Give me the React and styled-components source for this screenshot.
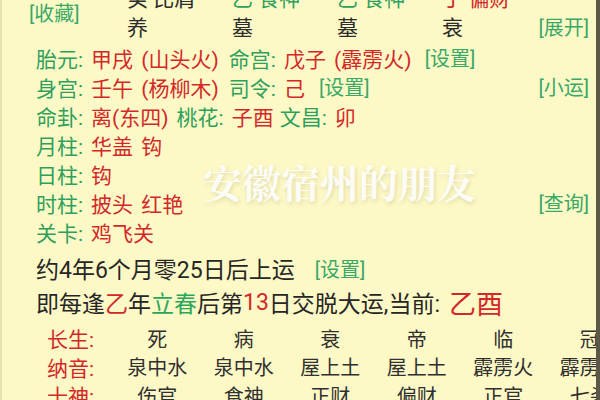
import React from "react";
import styled, { createGlobalStyle } from "styled-components";

const Global = createGlobalStyle`
  html, body { margin: 0; padding: 0; background: #5b5848; }
  body { font-family: Roboto, "Noto Sans CJK SC", sans-serif; }
`;

const GREEN = "#2f9f5c";
const LINK = "#3aa866";
const RED = "#d3282a";
const INK = "#2c2c2c";

const Screen = styled.div`
  position: relative;
  width: 594px;
  height: 400px;
  overflow: hidden;
  background: #fdf9c6;
  border-left: 2px solid #e6e1b0;
  font-family: Roboto, "Noto Sans CJK SC", sans-serif;
  color: ${INK};
`;

const Content = styled.div`
  margin-top: -15px;
  display: flex;
  flex-direction: column;
`;

const PillarHead = styled.div`
  display: grid;
  grid-template-columns: 125px repeat(4, 105px) minmax(0, 1fr);
  grid-template-rows: 29px 29px;
  align-items: center;
  font-size: 21px;
  line-height: 29px;
`;

const Link = styled.span`
  color: ${LINK};
  font-size: ${(p) => p.$size || 20}px;
  margin-left: ${(p) => p.$ml || 0}px;
  white-space: nowrap;
`;

const SideLink = styled(Link)`
  grid-row: ${(p) => p.$row};
  grid-column: ${(p) => p.$col};
  justify-self: ${(p) => p.$justify || "start"};
  align-self: center;
  padding-left: ${(p) => p.$pl || 0}px;
  padding-right: ${(p) => p.$pr || 0}px;
`;

const Cell = styled.span`
  grid-row: ${(p) => p.$row};
  grid-column: ${(p) => p.$col};
  color: ${(p) => p.$color || INK};
  white-space: nowrap;
`;

const InfoRow = styled.div`
  display: flex;
  align-items: center;
  justify-content: space-between;
  height: 29px;
  padding: 0 7px 0 34px;
  font-size: 21px;
  white-space: nowrap;
`;

const Left = styled.span`
  display: flex;
  align-items: center;
`;

const Label = styled.span`
  color: ${GREEN};
  margin-right: 8px;
  margin-left: ${(p) => p.$ml || 0}px;
`;

const Val = styled.span`
  color: ${(p) => p.$color || RED};
  margin-left: ${(p) => p.$ml || 0}px;
  word-spacing: 3px;
`;

const Sentence = styled.div`
  display: flex;
  align-items: center;
  height: 34px;
  padding-left: 34px;
  font-size: 23px;
  white-space: nowrap;
  margin-top: ${(p) => p.$mt || 0}px;
  color: #262626;
`;

const Em = styled.span`
  color: ${(p) => p.$color};
  font-size: ${(p) => p.$size || 23}px;
  margin-left: ${(p) => p.$ml || 0}px;
`;

const Table = styled.div`
  display: grid;
  grid-template-columns: 67px repeat(6, 86.5px);
  grid-auto-rows: 28.5px;
  align-items: center;
  padding-left: 45px;
  margin-top: 5px;
  width: max-content;
  font-size: 20px;
`;

const RowLabel = styled.span`
  color: ${RED};
  font-size: 21px;
`;

const TCell = styled.span`
  text-align: center;
  color: #303030;
  white-space: nowrap;
`;

const Watermark = styled.div`
  position: absolute;
  left: 201px;
  top: 153px;
  font-family: "Noto Serif CJK SC", "Liberation Serif", "Noto Sans CJK SC", serif;
  font-weight: 700;
  font-size: 39px;
  color: rgba(255, 255, 255, 0.9);
  text-shadow: 1px 2px 4px rgba(120, 110, 60, 0.22);
  white-space: nowrap;
  pointer-events: none;
`;

const pillars1 = [
  { t: "癸 比肩", c: INK },
  { t: "乙 食神", c: GREEN },
  { t: "乙 食神", c: GREEN },
  { t: "丁 偏财", c: RED },
];
const pillars2 = ["养", "墓", "墓", "衰"];

const table = [
  { label: "长生:", vals: ["死", "病", "衰", "帝", "临", "冠"] },
  { label: "纳音:", vals: ["泉中水", "泉中水", "屋上土", "屋上土", "霹雳火", "霹雳火"] },
  { label: "十神:", vals: ["伤官", "食神", "正财", "偏财", "正官", "七杀"] },
];

export default function App() {
  return (
    <>
      <Global />
      <Screen>
        <Content>
          <PillarHead>
            <SideLink $row="1 / span 2" $col="1" $pl={27}>[收藏]</SideLink>
            {pillars1.map((p, i) => (
              <Cell key={"a" + i} $color={p.c} $row={1} $col={i + 2}>
                {p.t}
              </Cell>
            ))}
            {pillars2.map((p, i) => (
              <Cell key={"b" + i} $row={2} $col={i + 2}>
                {p}
              </Cell>
            ))}
            <SideLink $row="2" $col="6" $justify="end" $pr={7}>[展开]</SideLink>
          </PillarHead>

          <InfoRow>
            <Left>
              <Label>胎元:</Label>
              <Val>甲戌 (山头火)</Val>
              <Label $ml={10}>命宫:</Label>
              <Val>戊子 (霹雳火)</Val>
              <Link $ml={13}>[设置]</Link>
            </Left>
          </InfoRow>
          <InfoRow>
            <Left>
              <Label>身宫:</Label>
              <Val>壬午 (杨柳木)</Val>
              <Label $ml={10}>司令:</Label>
              <Val>己</Val>
              <Link $ml={14}>[设置]</Link>
            </Left>
            <Link>[小运]</Link>
          </InfoRow>
          <InfoRow>
            <Left>
              <Label>命卦:</Label>
              <Val>离(东四)</Val>
              <Label $ml={8}>桃花:</Label>
              <Val>子酉</Val>
              <Label $ml={6}>文昌:</Label>
              <Val>卯</Val>
            </Left>
          </InfoRow>
          <InfoRow>
            <Left>
              <Label>月柱:</Label>
              <Val>华盖 钩</Val>
            </Left>
          </InfoRow>
          <InfoRow>
            <Left>
              <Label>日柱:</Label>
              <Val>钩</Val>
            </Left>
          </InfoRow>
          <InfoRow>
            <Left>
              <Label>时柱:</Label>
              <Val>披头 红艳</Val>
            </Left>
            <Link>[查询]</Link>
          </InfoRow>
          <InfoRow>
            <Left>
              <Label>关卡:</Label>
              <Val>鸡飞关</Val>
            </Left>
          </InfoRow>

          <Sentence $mt={5}>
            约4年6个月零25日后上运
            <Link $ml={20} $size={20}>[设置]</Link>
          </Sentence>
          <Sentence>
            即每逢<Em $color={RED}>乙</Em>年<Em $color="#2aa85a">立春</Em>后第
            <Em $color={RED}>13</Em>日交脱大运,当前:
            <Em $color={RED} $size={27} $ml={9}>乙酉</Em>
          </Sentence>

          <Table>
            {table.map((r) => (
              <React.Fragment key={r.label}>
                <RowLabel>{r.label}</RowLabel>
                {r.vals.map((v, i) => (
                  <TCell key={i}>{v}</TCell>
                ))}
              </React.Fragment>
            ))}
          </Table>
        </Content>
        <Watermark>安徽宿州的朋友</Watermark>
      </Screen>
    </>
  );
}
